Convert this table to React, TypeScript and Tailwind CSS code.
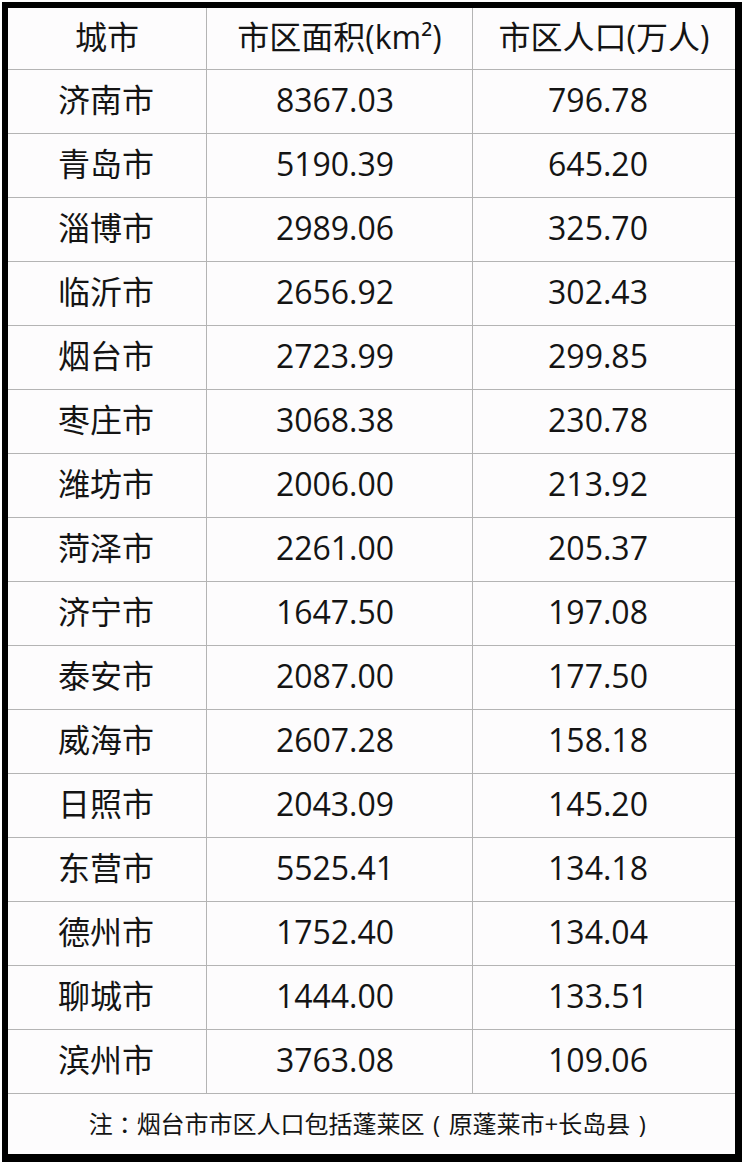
import React from "react";

const rows: [string, string, string][] = [
  ["济南市", "8367.03", "796.78"],
  ["青岛市", "5190.39", "645.20"],
  ["淄博市", "2989.06", "325.70"],
  ["临沂市", "2656.92", "302.43"],
  ["烟台市", "2723.99", "299.85"],
  ["枣庄市", "3068.38", "230.78"],
  ["潍坊市", "2006.00", "213.92"],
  ["菏泽市", "2261.00", "205.37"],
  ["济宁市", "1647.50", "197.08"],
  ["泰安市", "2087.00", "177.50"],
  ["威海市", "2607.28", "158.18"],
  ["日照市", "2043.09", "145.20"],
  ["东营市", "5525.41", "134.18"],
  ["德州市", "1752.40", "134.04"],
  ["聊城市", "1444.00", "133.51"],
  ["滨州市", "3763.08", "109.06"],
];

const tc = { fontFamily: '"Noto Sans CJK TC", sans-serif' };

export default function App() {
  return (
    <div
      className="w-[742px] h-[1162px] bg-white pt-[2px] pl-[2px] text-[#141414]"
      style={{ fontFamily: '"Open Sans", "Noto Sans CJK SC", sans-serif' }}
    >
      <div className="w-[740px] h-[1160px] border-t-[6px] border-l-[6px] border-r-[7px] border-b-[8px] border-black bg-[#fdfcfd] flex flex-col">
        <div className="grid grid-cols-[199px_266px_262px] h-[62px] border-b border-[#b4b4b4] text-[32px] leading-none">
          <div className="border-r border-[#b4b4b4] flex items-center justify-center pb-[4px]">城市</div>
          <div className="border-r border-[#b4b4b4] flex items-center justify-center pb-[4px]">市区面积(km²)</div>
          <div className="flex items-center justify-center pb-[4px]">市区人口(万人)</div>
        </div>
        {rows.map(([c, a, p]) => (
          <div
            key={c}
            className="grid grid-cols-[199px_266px_262px] h-[64px] border-b border-[#b4b4b4] text-[32px] leading-none"
          >
            <div className="border-r border-[#b4b4b4] flex items-center justify-center pb-[4px] pr-[2px]">{c}</div>
            <div className="border-r border-[#b4b4b4] flex items-center justify-center pr-[9px] pb-[4px]">{a}</div>
            <div className="flex items-center justify-center pr-[12px] pb-[4px]">{p}</div>
          </div>
        ))}
        <div className="h-[60px] flex items-center justify-center text-[24px] leading-none pb-[1px]">
          注<span style={tc}>：</span>烟台市市区人口包括蓬莱区
          <span className="inline-block w-[24px] text-center">(</span>原蓬莱市+长岛县
          <span className="inline-block w-[24px] text-center">)</span>
        </div>
      </div>
    </div>
  );
}
